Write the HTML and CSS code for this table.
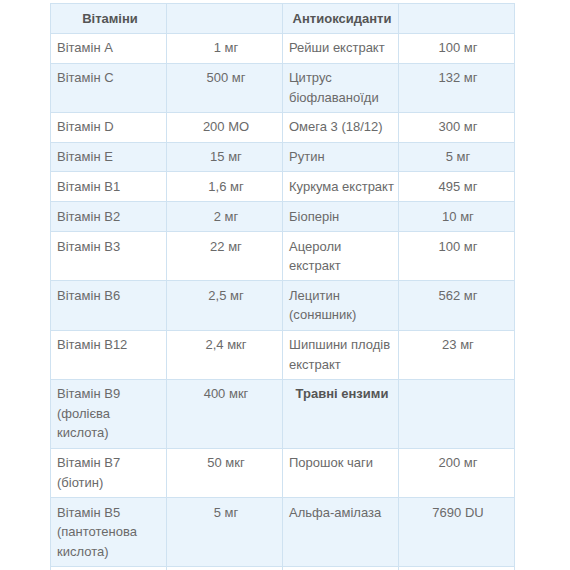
FILE: index.html
```html
<!DOCTYPE html>
<html lang="uk">
<head>
<meta charset="utf-8">
<title>Склад</title>
<link rel="stylesheet" href="styles.css">
</head>
<body>
<table class="comp">
  <tbody>
    <tr class="stripe"><th>Вітаміни</th><th></th><th>Антиоксиданти</th><th></th></tr>
    <tr><td>Вітамін A</td><td class="v">1 мг</td><td>Рейши екстракт</td><td class="v">100 мг</td></tr>
    <tr class="stripe"><td>Вітамін C</td><td class="v">500 мг</td><td>Цитрус біофлаваноїди</td><td class="v">132 мг</td></tr>
    <tr><td>Вітамін D</td><td class="v">200 МО</td><td>Омега 3 (18/12)</td><td class="v">300 мг</td></tr>
    <tr class="stripe"><td>Вітамін E</td><td class="v">15 мг</td><td>Рутин</td><td class="v">5 мг</td></tr>
    <tr><td>Вітамін B1</td><td class="v">1,6 мг</td><td>Куркума екстракт</td><td class="v">495 мг</td></tr>
    <tr class="stripe"><td>Вітамін B2</td><td class="v">2 мг</td><td>Біоперін</td><td class="v">10 мг</td></tr>
    <tr><td>Вітамін B3</td><td class="v">22 мг</td><td>Ацероли екстракт</td><td class="v">100 мг</td></tr>
    <tr class="stripe"><td>Вітамін B6</td><td class="v">2,5 мг</td><td>Лецитин (соняшник)</td><td class="v">562 мг</td></tr>
    <tr><td>Вітамін B12</td><td class="v">2,4 мкг</td><td>Шипшини плодів екстракт</td><td class="v">23 мг</td></tr>
    <tr class="stripe"><td>Вітамін B9 (фолієва кислота)</td><td class="v">400 мкг</td><th>Травні ензими</th><td></td></tr>
    <tr><td>Вітамін B7 (біотин)</td><td class="v">50 мкг</td><td>Порошок чаги</td><td class="v">200 мг</td></tr>
    <tr class="stripe"><td>Вітамін B5 (пантотенова кислота)</td><td class="v">5 мг</td><td>Альфа-амілаза</td><td class="v">7690 DU</td></tr>
    <tr><td>&nbsp;</td><td></td><td></td><td></td></tr>
  </tbody>
</table>
</body>
</html>
```

FILE: styles.css
```css
html, body {
  margin: 0;
  padding: 0;
  background: #ffffff;
}
body {
  font-family: "Liberation Sans", Arial, sans-serif;
  font-size: 13px;
  line-height: 19.5px;
  color: #6a6a6a;
}
.comp {
  border-collapse: collapse;
  table-layout: fixed;
  width: 465px;
  margin: 3px 0 0 50px;
}
.comp td, .comp th {
  border: 1px solid #cfe2f1;
  padding: 4.65px 3px 4.65px 6px;
  vertical-align: top;
  text-align: left;
  font-weight: normal;
}
.comp th {
  text-align: center;
  font-weight: bold;
  color: #555555;
}
.comp td.v {
  text-align: center;
}
.comp tr.stripe td, .comp tr.stripe th {
  background: #eaf4fc;
}
```
